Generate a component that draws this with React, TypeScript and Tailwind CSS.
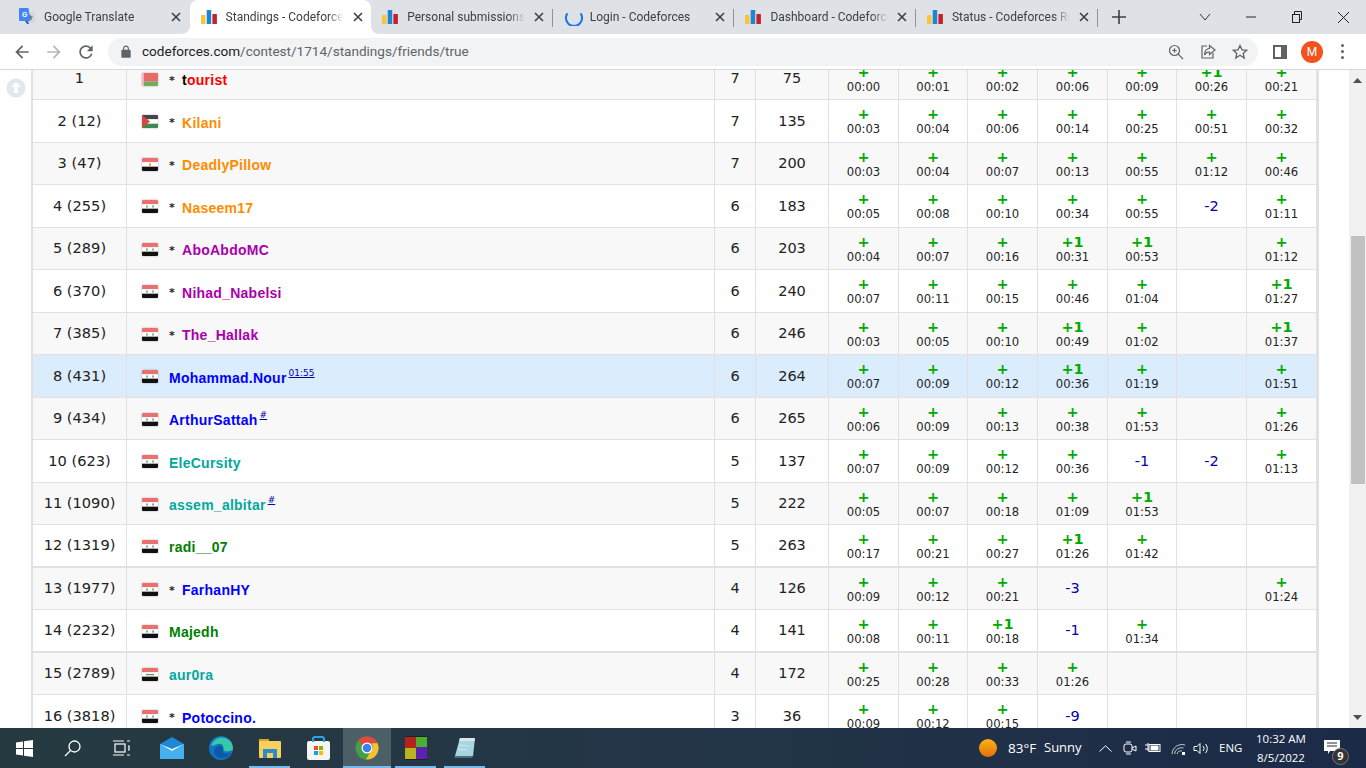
import React from "react";

type RowData = { rank: string; flag: string; star?: boolean; name: React.ReactNode; color: string; solved: string; pen: string; cells: string[]; sup?: string; bg: string; thick?: boolean };

const Flag = ({ kind }: { kind: string }) => {
  const inner = () => {
    if (kind === "by") return (<><rect width="16" height="8" fill="#e96a6a" /><rect y="8" width="16" height="4" fill="#6fae58" /><rect width="2" height="12" fill="#f3b5b5" /></>);
    if (kind === "jo") return (<><rect width="16" height="4" fill="#444" /><rect y="4" width="16" height="4" fill="#fff" /><rect y="8" width="16" height="4" fill="#3c8a4f" /><polygon points="0,0 8,6 0,12" fill="#d84545" /></>);
    if (kind === "eg") return (<><rect width="16" height="4" fill="#ec6f6f" /><rect y="4" width="16" height="4" fill="#fff" /><rect y="8" width="16" height="4" fill="#111" /><rect x="7" y="5" width="2" height="2" fill="#c9a227" /></>);
    if (kind === "iq") return (<><rect width="16" height="4" fill="#ec6f6f" /><rect y="4" width="16" height="4" fill="#fff" /><rect y="8" width="16" height="4" fill="#111" /><rect x="4" y="5.5" width="8" height="1.2" fill="#5a9a5a" /></>);
    return (<><rect width="16" height="4" fill="#ec6f6f" /><rect y="4" width="16" height="4" fill="#fff" /><rect y="8" width="16" height="4" fill="#111" /><rect x="4" y="5" width="2" height="2" fill="#7fb98a" /><rect x="10" y="5" width="2" height="2" fill="#7fb98a" /></>);
  };
  return <svg width="16" height="13" viewBox="0 0 16 12" preserveAspectRatio="none" className="mt-[2px] shrink-0 rounded-[1px] shadow-[0_0_2px_rgba(0,0,0,0.35)]">{inner()}</svg>;
};

const G = "bg-[#f8f8f8]";
const W = "bg-white";
const rows: RowData[] = [
  { rank: "1", flag: "by", star: true, name: <><span className="text-black">t</span>ourist</>, color: "text-[#ff0000]", solved: "7", pen: "75", bg: G, cells: ["+|00:00", "+|00:01", "+|00:02", "+|00:06", "+|00:09", "+1|00:26", "+|00:21"] },
  { rank: "2 (12)", flag: "jo", star: true, name: "Kilani", color: "text-[#ff8c00]", solved: "7", pen: "135", bg: W, cells: ["+|00:03", "+|00:04", "+|00:06", "+|00:14", "+|00:25", "+|00:51", "+|00:32"] },
  { rank: "3 (47)", flag: "eg", star: true, name: "DeadlyPillow", color: "text-[#ff8c00]", solved: "7", pen: "200", bg: G, cells: ["+|00:03", "+|00:04", "+|00:07", "+|00:13", "+|00:55", "+|01:12", "+|00:46"] },
  { rank: "4 (255)", flag: "sy", star: true, name: "Naseem17", color: "text-[#ff8c00]", solved: "6", pen: "183", bg: W, cells: ["+|00:05", "+|00:08", "+|00:10", "+|00:34", "+|00:55", "-2", "+|01:11"] },
  { rank: "5 (289)", flag: "sy", star: true, name: "AboAbdoMC", color: "text-[#aa00aa]", solved: "6", pen: "203", bg: G, cells: ["+|00:04", "+|00:07", "+|00:16", "+1|00:31", "+1|00:53", "", "+|01:12"] },
  { rank: "6 (370)", flag: "sy", star: true, name: "Nihad_Nabelsi", color: "text-[#aa00aa]", solved: "6", pen: "240", bg: W, cells: ["+|00:07", "+|00:11", "+|00:15", "+|00:46", "+|01:04", "", "+1|01:27"] },
  { rank: "7 (385)", flag: "sy", star: true, name: "The_Hallak", color: "text-[#aa00aa]", solved: "6", pen: "246", bg: G, cells: ["+|00:03", "+|00:05", "+|00:10", "+1|00:49", "+|01:02", "", "+1|01:37"] },
  { rank: "8 (431)", flag: "sy", name: "Mohammad.Nour", sup: "01:55", color: "text-[#0000ff]", solved: "6", pen: "264", bg: "bg-[#dbecfd]", cells: ["+|00:07", "+|00:09", "+|00:12", "+1|00:36", "+|01:19", "", "+|01:51"] },
  { rank: "9 (434)", flag: "sy", name: "ArthurSattah", sup: "#", color: "text-[#0000ff]", solved: "6", pen: "265", bg: G, cells: ["+|00:06", "+|00:09", "+|00:13", "+|00:38", "+|01:53", "", "+|01:26"] },
  { rank: "10 (623)", flag: "sy", name: "EleCursity", color: "text-[#03a89e]", solved: "5", pen: "137", bg: W, cells: ["+|00:07", "+|00:09", "+|00:12", "+|00:36", "-1", "-2", "+|01:13"] },
  { rank: "11 (1090)", flag: "sy", name: "assem_albitar", sup: "#", color: "text-[#03a89e]", solved: "5", pen: "222", bg: G, cells: ["+|00:05", "+|00:07", "+|00:18", "+|01:09", "+1|01:53", "", ""] },
  { rank: "12 (1319)", flag: "sy", name: "radi__07", color: "text-[#008000]", solved: "5", pen: "263", bg: W, thick: true, cells: ["+|00:17", "+|00:21", "+|00:27", "+1|01:26", "+|01:42", "", ""] },
  { rank: "13 (1977)", flag: "sy", star: true, name: "FarhanHY", color: "text-[#0000ff]", solved: "4", pen: "126", bg: G, cells: ["+|00:09", "+|00:12", "+|00:21", "-3", "", "", "+|01:24"] },
  { rank: "14 (2232)", flag: "sy", name: "Majedh", color: "text-[#008000]", solved: "4", pen: "141", bg: W, thick: true, cells: ["+|00:08", "+|00:11", "+1|00:18", "-1", "+|01:34", "", ""] },
  { rank: "15 (2789)", flag: "iq", name: "aur0ra", color: "text-[#03a89e]", solved: "4", pen: "172", bg: G, cells: ["+|00:25", "+|00:28", "+|00:33", "+|01:26", "", "", ""] },
  { rank: "16 (3818)", flag: "sy", star: true, name: "Potoccino.", color: "text-[#0000ff]", solved: "3", pen: "36", bg: W, cells: ["+|00:09", "+|00:12", "+|00:15", "-9", "", "", ""] },
];

const Cell = ({ v, last }: { v: string; last: boolean }) => {
  const border = last ? "" : "border-r border-[#e1e1e1]";
  if (!v) return <div className={border} />;
  if (v[0] === "-") return <div className={`${border} flex items-center justify-center pt-[2px] text-[14.5px] text-[#0000aa]`}>{v}</div>;
  const [a, t] = v.split("|");
  return (
    <div className={`${border} flex flex-col items-center justify-center pt-[2px]`}>
      <span className="h-[14px] text-[14.5px] leading-[14px] font-bold text-[#00aa00]">{a}</span>
      <span className="mt-[2px] h-[13px] text-[11.6px] leading-[13px] text-[#222]">{t}</span>
    </div>
  );
};

const Row = ({ r }: { r: RowData }) => (
  <div className={`grid h-[42.5px] grid-cols-[94px_588px_41px_73px_70px_69px_70px_70px_69px_70px_69px] ${r.thick ? "border-b-2" : "border-b"} border-[#e1e1e1] ${r.bg}`}>
    <div className="flex items-center justify-center border-r border-[#e1e1e1] text-[14.6px] text-[#222]">{r.rank}</div>
    <div className="flex items-center border-r border-[#e1e1e1] pl-[15px]">
      <Flag kind={r.flag} />
      <span className="ml-[11px] flex items-center pt-[5px] font-['Liberation_Sans',sans-serif] text-[14px] font-bold tracking-[0.25px]">
        {r.star && <span className="mr-[7px] font-['DejaVu_Sans',sans-serif] text-[11px] font-bold text-[#222]">*</span>}
        <span className={r.color}>{r.name}</span>
        {r.sup && <span className="-mt-[10px] ml-[2px] font-['DejaVu_Sans',sans-serif] text-[9px] font-normal tracking-normal text-[#0000aa] underline">{r.sup}</span>}
      </span>
    </div>
    <div className="flex items-center justify-center border-r border-[#e1e1e1] pt-[2px] text-[14.5px] text-[#222]">{r.solved}</div>
    <div className="flex items-center justify-center border-r border-[#e1e1e1] pt-[2px] text-[14.5px] text-[#222]">{r.pen}</div>
    {r.cells.map((c, i) => <Cell key={i} v={c} last={i === 6} />)}
  </div>
);

const CF = () => (
  <svg width="16" height="14" viewBox="0 0 16 14" className="shrink-0">
    <rect x="0" y="5" width="4.5" height="9" rx="0.6" fill="#f6c43d" />
    <rect x="5.7" y="0" width="4.5" height="14" rx="0.6" fill="#1c87d0" />
    <rect x="11.4" y="4" width="4.5" height="10" rx="0.6" fill="#c4212c" />
  </svg>
);
const Translate = () => (
  <svg width="16" height="18" viewBox="0 0 16 18" className="shrink-0">
    <rect x="6" y="4" width="10" height="11" rx="1" fill="#d5d7da" />
    <path d="M11 6l1 2.2 2.2.2-1.7 1.4.6 2.2-2.1-1.2-2 1.2.5-2.2-1.6-1.4 2.2-.2z" fill="#6b7177" />
    <path d="M1 0h8.5l2 13H1a1 1 0 0 1-1-1V1a1 1 0 0 1 1-1z" fill="#4285f4" />
    <path d="M6 13l2 3h2l-1-3z" fill="#3367b5" />
    <text x="3" y="9" fontSize="7" fontWeight="700" fill="#fff" fontFamily="'Liberation Sans',sans-serif">G</text>
  </svg>
);
const Spinner = () => (
  <svg width="18" height="18" viewBox="0 0 18 18" className="shrink-0">
    <path d="M2 6a8 8 0 1 0 14 0" fill="none" stroke="#1a73e8" strokeWidth="2" strokeLinecap="round" />
  </svg>
);
const TabClose = () => (
  <svg width="10" height="10" viewBox="0 0 10 10" className="shrink-0"><path d="M1 1l8 8M9 1l-8 8" stroke="#3c4043" strokeWidth="1.6" /></svg>
);

const Tab = ({ icon, title, active, sep, spin }: { icon: React.ReactNode; title: string; active?: boolean; sep?: boolean; spin?: boolean }) => (
  <div className={`relative flex h-[34px] w-[181.6px] shrink-0 items-center pl-[10px] ${active ? "rounded-t-[8px] bg-white" : ""}`}>
    {active && (
      <>
        <svg width="8" height="8" viewBox="0 0 8 8" className="absolute bottom-0 -left-[8px]"><path d="M8 0v8H0a8 8 0 0 0 8-8z" fill="#fff" /></svg>
        <svg width="8" height="8" viewBox="0 0 8 8" className="absolute -right-[8px] bottom-0"><path d="M0 0v8h8a8 8 0 0 1-8-8z" fill="#fff" /></svg>
      </>
    )}
    <span className={`flex w-[18px] justify-center ${spin ? "mr-[7px] ml-[2px]" : "mr-[8px]"}`}>{icon}</span>
    <span className={`${spin ? "w-[116px]" : "w-[118px]"} overflow-hidden whitespace-nowrap font-['Roboto',sans-serif] text-[12px] text-[#3c4043] [mask-image:linear-gradient(to_right,black_86%,transparent)]`}>{title}</span>
    <span className="ml-[8px] flex w-[12px] justify-center"><TabClose /></span>
    {sep && <span className="absolute top-[9px] right-0 h-[18px] w-px bg-[#8f9297]" />}
  </div>
);

const M = ({ d, size = 20, fill = "#5f6368" }: { d: string; size?: number; fill?: string }) => (
  <svg width={size} height={size} viewBox="0 0 24 24" className="shrink-0"><path d={d} fill={fill} /></svg>
);

const ChromeUI = () => (
  <div className="shrink-0">
    <div className="flex h-[34px] items-center bg-[#dee1e6] pl-[8px]">
      <Tab icon={<Translate />} title="Google Translate" />
      <Tab icon={<CF />} title="Standings - Codeforces" active />
      <Tab icon={<CF />} title="Personal submissions - Codeforces" sep />
      <Tab icon={<Spinner />} spin title="Login - Codeforces" sep />
      <Tab icon={<CF />} title="Dashboard - Codeforces" sep />
      <Tab icon={<CF />} title="Status - Codeforces Round" sep />
      <svg width="14" height="14" viewBox="0 0 14 14" className="ml-[14px] shrink-0"><path d="M7 0v14M0 7h14" stroke="#3c4043" strokeWidth="1.6" /></svg>
      <div className="ml-auto flex h-full items-center">
        <span className="flex w-[46px] justify-center"><svg width="12" height="8" viewBox="0 0 12 8"><path d="M1 1l5 6 5-6" fill="none" stroke="#333" /></svg></span>
        <span className="flex w-[46px] justify-center"><svg width="10" height="2" viewBox="0 0 10 2"><path d="M0 1h10" stroke="#222" /></svg></span>
        <span className="flex w-[46px] justify-center"><svg width="12" height="12" viewBox="0 0 12 12" fill="none" stroke="#222"><rect x="1.5" y="3.5" width="7" height="8" /><path d="M3.5 3.5v-3h7v8h-2" /></svg></span>
        <span className="flex w-[46px] justify-center"><svg width="11" height="11" viewBox="0 0 11 11"><path d="M0 0l11 11M11 0L0 11" stroke="#222" /></svg></span>
      </div>
    </div>
    <div className="flex h-[36px] items-center border-b border-[#d5d7db] bg-white">
      <span className="ml-[12px] flex w-[20px] justify-center"><M d="M20 11H7.83l5.59-5.59L12 4l-8 8 8 8 1.41-1.41L7.83 13H20v-2z" /></span>
      <span className="ml-[12px] flex w-[20px] justify-center"><M fill="#b4b6ba" d="M4 11h12.17l-5.59-5.59L12 4l8 8-8 8-1.41-1.41L16.17 13H4v-2z" /></span>
      <span className="ml-[12px] flex w-[20px] justify-center"><M d="M17.65 6.35A7.96 7.96 0 0 0 12 4c-4.42 0-7.99 3.58-7.99 8s3.57 8 7.99 8c3.73 0 6.84-2.55 7.73-6h-2.08A5.99 5.99 0 0 1 12 18c-3.31 0-6-2.69-6-6s2.69-6 6-6c1.66 0 3.14.69 4.22 1.78L13 11h7V4l-2.35 2.35z" /></span>
      <div className="ml-[12px] flex h-[28px] w-[1150px] items-center rounded-full bg-[#f1f3f4] pl-[11px] pr-[10px]">
        <M size={14} d="M18 8h-1V6c0-2.76-2.24-5-5-5S7 3.24 7 6v2H6c-1.1 0-2 .9-2 2v10c0 1.1.9 2 2 2h12c1.1 0 2-.9 2-2V10c0-1.1-.9-2-2-2zM9 6c0-1.66 1.34-3 3-3s3 1.34 3 3v2H9V6z" />
        <span className="ml-[9px] font-['Roboto',sans-serif] text-[13.55px] text-[#5f6368]"><span className="text-[#202124]">codeforces.com</span>/contest/1714/standings/friends/true</span>
        <div className="ml-auto flex items-center gap-[16px]">
          <svg width="16" height="16" viewBox="0 0 16 16" fill="none" stroke="#5f6368" strokeWidth="1.2"><circle cx="6.5" cy="6.5" r="5" /><path d="M10.2 10.2L15 15M4.2 6.500h4.600M6.500 4.200v4.600" /></svg>
          <svg width="16" height="16" viewBox="0 0 16 16" fill="none" stroke="#5f6368" strokeWidth="1.2"><path d="M7 2H2v12h11V9" /><path d="M9.500 1.500L15 6l-5.500 4.500V8C7 8 5.500 9 4.500 11c0-4 2-6.500 5-6.500z" /></svg>
          <svg width="16" height="16" viewBox="0 0 16 16" fill="none" stroke="#5f6368" strokeWidth="1.3"><path d="M8 1.500l2 4.300 4.700.5-3.500 3.200 1 4.600L8 11.300l-4.200 2.800 1-4.600L1.300 6.300 6 5.800z" /></svg>
        </div>
      </div>
      <svg width="14" height="14" viewBox="0 0 14 14" className="ml-[15px] shrink-0"><rect x="1" y="1" width="12" height="12" fill="none" stroke="#5f6368" strokeWidth="2" /><rect x="8" y="1" width="5" height="12" fill="#5f6368" /></svg>
      <span className="ml-[14px] flex h-[22px] w-[22px] items-center justify-center rounded-full bg-[#f4511e] font-['Roboto',sans-serif] text-[12px] text-white">M</span>
      <span className="ml-[18px] flex flex-col gap-[3px]"><i className="h-[3px] w-[3px] rounded-full bg-[#5f6368]" /><i className="h-[3px] w-[3px] rounded-full bg-[#5f6368]" /><i className="h-[3px] w-[3px] rounded-full bg-[#5f6368]" /></span>
    </div>
  </div>
);

const TaskIcon = ({ children, w = 49, active, line }: { children: React.ReactNode; w?: number; active?: boolean; line?: boolean }) => (
  <div className={`relative flex h-full shrink-0 items-center justify-center ${active ? "bg-[#4c5f66]" : ""}`} style={{ width: w }}>
    {children}
    {line && <span className={`absolute right-0 bottom-0 left-0 h-[2px] bg-[#76b9ed] ${active ? "" : "mx-[4px]"}`} />}
  </div>
);

const Taskbar = () => (
  <div className="flex h-[40px] shrink-0 items-center bg-gradient-to-r from-[#263a41] via-[#233547] to-[#1b2a47] font-['Open_Sans',sans-serif] text-white">
    <TaskIcon w={48}><svg width="17" height="17" viewBox="0 0 17 17" fill="#fff"><path d="M0 2.400L7 1.400V8H0zM8 1.200L17 0v8H8zM0 9h7v6.600l-7-1zM8 9h9v8l-9-1.300z" /></svg></TaskIcon>
    <TaskIcon w={48}><svg width="17" height="17" viewBox="0 0 17 17" fill="none" stroke="#fff" strokeWidth="1.3"><circle cx="10.500" cy="6.500" r="5.500" /><path d="M6.500 10.500L1 16" /></svg></TaskIcon>
    <TaskIcon w={51}><svg width="17" height="16" viewBox="0 0 17 16" fill="none" stroke="#fff" strokeWidth="1.2"><rect x="2" y="4" width="10" height="8" /><path d="M0 1h11M0 15h11M14 1h3M14 15h3M15 6h1v4h-1" /></svg></TaskIcon>
    <TaskIcon><svg width="24" height="22" viewBox="0 0 24 22"><path d="M12 0L24 7v15H0V7z" fill="#1e88d8" /><path d="M0 7l12 7 12-7v15H0z" fill="#45b0ee" /><path d="M0 7l12 7 12-7-12 5z" fill="#fff" /></svg></TaskIcon>
    <TaskIcon><svg width="24" height="24" viewBox="0 0 24 24"><circle cx="12" cy="12" r="12" fill="#0f74c7" /><path d="M2 10C4 2 14-2 21 5c3 3 3 7 3 9-5 2-9 2-10-1 1-3-1-6-5-5-4 1-6 2-7 2z" fill="#38c8a8" /><path d="M8 21c-5-4-3-11 3-11 3 0 4 2 3 4-2 3 4 5 8 2-2 5-9 8-14 5z" fill="#0c5aa6" /></svg></TaskIcon>
    <TaskIcon line><svg width="22" height="19" viewBox="0 0 22 19"><rect y="0" width="10" height="5" fill="#d9a32a" /><rect y="2" width="22" height="17" rx="1" fill="#f6cf5c" /><rect x="4" y="10" width="14" height="9" fill="#2d8ad0" /><rect x="8" y="14" width="6" height="5" fill="#f6cf5c" /></svg></TaskIcon>
    <TaskIcon><svg width="23" height="24" viewBox="0 0 23 24"><rect y="5" width="23" height="19" rx="2" fill="#f4f4f4" /><path d="M6 6V3a2 2 0 0 1 2-2h7a2 2 0 0 1 2 2v3" fill="none" stroke="#2aa5e0" strokeWidth="2" /><rect x="7" y="10" width="4" height="4" fill="#f25022" /><rect x="12" y="10" width="4" height="4" fill="#7fba00" /><rect x="7" y="15" width="4" height="4" fill="#00a4ef" /><rect x="12" y="15" width="4" height="4" fill="#ffb900" /></svg></TaskIcon>
    <TaskIcon active line w={48}>
      <svg width="24" height="24" viewBox="0 0 24 24">
        <circle cx="12" cy="12" r="11.500" fill="#43a047" />
        <path d="M12 .5a11.500 11.500 0 0 1 10.500 6.800H12a4.800 4.800 0 0 0-4.300 2.600L3.500 4A11.500 11.500 0 0 1 12 .5z" fill="#e8463a" />
        <path d="M22.500 7.300A11.500 11.500 0 0 1 11 23.500l5.200-9a4.800 4.800 0 0 0 .2-7.200z" fill="#fbc02d" />
        <circle cx="12" cy="12" r="5.500" fill="#fff" />
        <circle cx="12" cy="12" r="4.300" fill="#3b82e8" />
      </svg>
    </TaskIcon>
    <TaskIcon line><svg width="22" height="24" viewBox="0 0 22 24"><rect x="0" y="0" width="11" height="12" fill="#b3221c" /><rect x="11" y="0" width="11" height="11" fill="#4caf2f" /><rect x="0" y="12" width="11" height="12" fill="#b8b31f" /><rect x="11" y="11" width="11" height="12" fill="#5a22b0" /><path d="M0 0h22v1H0zM0 23h22v1H0z" fill="#222" /></svg></TaskIcon>
    <TaskIcon line><svg width="24" height="22" viewBox="0 0 24 22"><path d="M7 1h15l-2 18H2z" fill="#a6d6e3" /><path d="M7 1h15l-.4 3H6z" fill="#dfe5e8" /><path d="M2 19h18l-1 2H1z" fill="#4d6b78" /><path d="M6 8l10 1M5 12l10 1" stroke="#cfe9ef" /></svg></TaskIcon>
    <div className="ml-auto flex h-full items-center">
      <span className="h-[18px] w-[18px] rounded-full bg-gradient-to-b from-[#f9b414] to-[#e66d07]" />
      <span className="ml-[11px] w-[36px] text-[13.5px]">83°F</span>
      <span className="w-[52px] text-[13px]">Sunny</span>
      <svg width="13" height="7" viewBox="0 0 13 7" className="ml-[2.5px]"><path d="M.5 6.500L6.500 .8l6 5.700" fill="none" stroke="#fff" /></svg>
      <svg width="14" height="14" viewBox="0 0 14 14" fill="none" stroke="#fff" className="ml-[11.5px]"><rect x="1" y="3" width="8" height="8" rx="2" /><path d="M9 7l4-2v5L9 8M3 1h5M3 13h5" /></svg>
      <svg width="16" height="12" viewBox="0 0 16 12" fill="none" stroke="#fff" className="ml-[8px]"><rect x="4" y="2.500" width="11" height="7" fill="none" /><rect x="6" y="4" width="7" height="4" fill="#fff" /><path d="M0 3h3M0 7h3M3 1v8" /></svg>
      <svg width="15" height="13" viewBox="0 0 15 13" fill="none" stroke="#c8ccd2" className="ml-[9.5px]"><path d="M1 12a10 10 0 0 1 13-9M3.500 12a7 7 0 0 1 9-6M6 12a4 4 0 0 1 5-3" /><rect x="11" y="10" width="3" height="3" fill="#fff" stroke="none" /></svg>
      <svg width="16" height="13" viewBox="0 0 16 13" fill="none" stroke="#fff" className="ml-[7.5px]"><path d="M1 4.500h3l3-3v10l-3-3H1zM10 4a3.500 3.500 0 0 1 0 5M12.500 2a6.500 6.500 0 0 1 0 9" /></svg>
      <span className="ml-[10px] w-[32px] text-[11.5px]">ENG</span>
      <div className="ml-[2px] flex w-[56px] flex-col items-center text-[11.5px] leading-[19px]"><span>10:32 AM</span><span>8/5/2022</span></div>
      <div className="relative mr-[24px] ml-[15px] flex h-full w-[18px] items-center">
        <svg width="16" height="14" viewBox="0 0 16 14" className="-mt-[2px]"><path d="M0 0h16v11H6l-2 3v-3H0z" fill="#fff" /><path d="M3 3h10M3 6h10" stroke="#1b2a47" /></svg>
        <span className="absolute top-[20px] left-[8px] flex h-[17px] w-[17px] items-center justify-center rounded-full border border-[#777] bg-[#333] text-[11px] font-bold">9</span>
      </div>
    </div>
  </div>
);

export default function App() {
  return (
    <div className="flex h-screen w-screen flex-col overflow-hidden bg-white font-['DejaVu_Sans',sans-serif]">
      <ChromeUI />
      <div className="relative flex min-h-0 flex-1">
        <svg width="20" height="20" viewBox="0 0 20 20" className="absolute top-[8px] left-[6px]">
          <circle cx="10" cy="10" r="9.500" fill="#e1e6ef" />
          <path d="M10 4l5 5h-3v6H8V9H5z" fill="#fff" />
        </svg>
        <div className="ml-[31px] h-full w-[1288px] shrink-0 overflow-hidden border-r-[3px] border-l-2 border-[#e1e1e1]">
          <div className="-mt-[12.5px]">
            {rows.map((r) => <Row key={r.rank} r={r} />)}
          </div>
        </div>
        <div className="ml-auto flex h-full w-[17px] shrink-0 flex-col items-center bg-[#f1f1f1]">
          <svg width="9" height="5" viewBox="0 0 9 5" className="mt-[8px]"><path d="M4.500 0L9 5H0z" fill="#505050" /></svg>
          <div className="mt-[153px] h-[248px] w-[14px] bg-[#c1c1c1]" />
          <svg width="9" height="5" viewBox="0 0 9 5" className="mt-auto mb-[8px]"><path d="M4.500 5L9 0H0z" fill="#505050" /></svg>
        </div>
      </div>
      <Taskbar />
    </div>
  );
}
